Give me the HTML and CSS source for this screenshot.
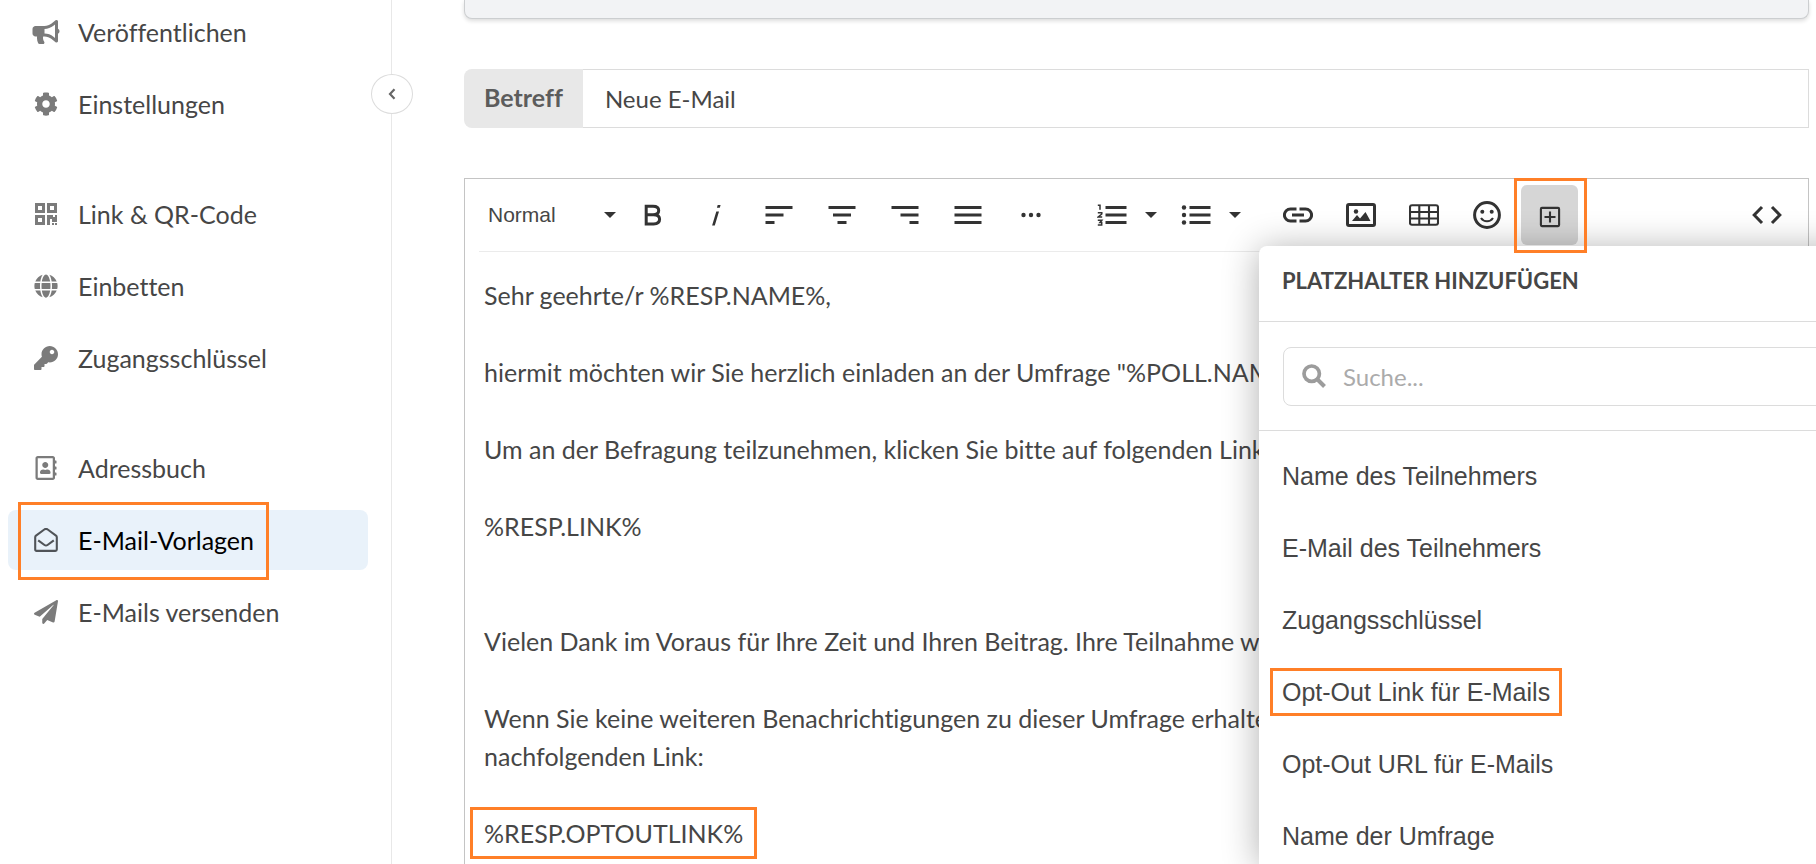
FILE: index.html
```html
<!DOCTYPE html>
<html lang="de">
<head>
<meta charset="utf-8">
<meta name="viewport" content="width=device-width, initial-scale=1">
<title>E-Mail-Vorlagen</title>
<link rel="stylesheet" href="styles.css">
</head>
<body>
<div class="app">
  <aside class="sidebar">
    <nav class="nav">
      <div class="nav-group">
        <a class="nav-item" href="#"><svg class="nav-icon wide" viewBox="0 0 576 512"><path d="M576 240c0-23.630-12.950-44.040-32-55.120V32.010C544 23.260 537.020 0 512 0c-7.120 0-14.190 2.380-19.980 7.020l-85.030 68.030C364.280 109.190 310.660 128 256 128H64c-35.350 0-64 28.650-64 64v96c0 35.350 28.650 64 64 64h33.700c-1.390 10.480-2.180 21.140-2.180 32 0 39.770 9.260 77.350 25.560 110.940 5.190 10.690 16.520 17.060 28.400 17.060h74.280c26.050 0 41.690-29.840 25.900-50.560-16.400-21.520-26.150-48.360-26.150-77.440 0-11.110 1.620-21.790 4.410-32H256c54.660 0 108.280 18.810 150.980 52.950l85.030 68.030a32.023 32.023 0 0 0 19.980 7.020c24.920 0 32-22.780 32-32V295.130C563.050 284.040 576 263.630 576 240zm-96 141.420l-33.050-26.440C392.950 311.780 325.120 288 256 288v-96c69.120 0 136.950-23.780 190.950-66.980L480 98.580v282.840z"/></svg>Veröffentlichen</a>
        <a class="nav-item" href="#"><svg class="nav-icon" viewBox="0 0 512 512"><path d="M487.400 315.700l-42.600-24.600c4.300-23.200 4.300-47 0-70.200l42.600-24.600c4.900-2.800 7.100-8.600 5.500-14-11.100-35.600-30-67.800-54.700-94.600-3.800-4.100-10-5.100-14.800-2.300L380.800 110c-17.900-15.400-38.500-27.300-60.800-35.100V25.800c0-5.600-3.900-10.500-9.400-11.700-36.700-8.200-74.300-7.800-109.200 0-5.500 1.200-9.400 6.100-9.400 11.700V75c-22.200 7.900-42.800 19.800-60.800 35.100L88.700 85.500c-4.900-2.800-11-1.900-14.800 2.300-24.700 26.700-43.600 58.900-54.700 94.600-1.700 5.400.6 11.200 5.500 14L67.300 221c-4.300 23.200-4.300 47 0 70.200l-42.600 24.600c-4.900 2.800-7.100 8.600-5.500 14 11.100 35.600 30 67.800 54.700 94.600 3.800 4.100 10 5.100 14.800 2.300l42.600-24.600c17.900 15.400 38.500 27.300 60.800 35.100v49.200c0 5.600 3.900 10.500 9.400 11.700 36.700 8.200 74.300 7.800 109.200 0 5.500-1.200 9.400-6.100 9.400-11.700v-49.200c22.200-7.900 42.800-19.800 60.800-35.100l42.600 24.600c4.900 2.800 11 1.900 14.800-2.300 24.700-26.700 43.600-58.900 54.700-94.600 1.500-5.500-.7-11.300-5.600-14.100zM256 336c-44.100 0-80-35.900-80-80s35.900-80 80-80 80 35.900 80 80-35.900 80-80 80z"/></svg>Einstellungen</a>
      </div>
      <div class="nav-group">
        <a class="nav-item" href="#"><svg class="nav-icon" viewBox="0 0 24 24"><path fill-rule="evenodd" d="M1 1h10v10H1zM4 4v4h4V4zM13 1h10v10H13zM16 4v4h4V4zM1 13h10v10H1zM4 16v4h4v-4zM13 13h6v2h2v-2h2v7h-5v-3h-2v6h-3zM18 21h2v2h-2zM21 21h2v2h-2z"/></svg>Link &amp; QR-Code</a>
        <a class="nav-item" href="#"><svg class="nav-icon" viewBox="0 0 496 512"><path d="M336.500 160C322 70.700 287.800 8 248 8s-74 62.700-88.500 152h177zM152 256c0 22.200 1.200 43.500 3.300 64h185.300c2.100-20.500 3.300-41.800 3.300-64s-1.200-43.500-3.300-64H155.300c-2.100 20.500-3.300 41.800-3.300 64zm324.700-96c-28.600-67.900-86.500-120.400-158-141.600 24.400 33.800 41.200 84.700 50 141.600h108zM177.200 18.400C105.800 39.600 47.800 92.100 19.300 160h108c8.700-56.900 25.500-107.800 49.900-141.600zM487.400 192H372.700c2.100 21 3.300 42.500 3.300 64s-1.200 43-3.300 64h114.600c5.500-20.500 8.600-41.800 8.600-64s-3.100-43.500-8.500-64zM120 256c0-21.500 1.200-43 3.300-64H8.600C3.200 212.500 0 233.800 0 256s3.200 43.500 8.600 64h114.600c-2-21-3.200-42.500-3.200-64zm39.500 96c14.500 89.300 48.700 152 88.500 152s74-62.700 88.500-152h-177zm159.300 141.600c71.400-21.200 129.400-73.700 158-141.600h-108c-8.800 56.900-25.600 107.800-50 141.600zM19.300 352c28.600 67.900 86.500 120.400 158 141.600-24.400-33.800-41.200-84.700-50-141.600h-108z"/></svg>Einbetten</a>
        <a class="nav-item" href="#"><svg class="nav-icon" viewBox="0 0 512 512"><path d="M512 176.001C512 273.203 433.202 352 336 352c-11.220 0-22.190-1.062-32.827-3.069l-24.012 27.014A23.999 23.999 0 0 1 261.223 384H224v40c0 13.255-10.745 24-24 24h-40v40c0 13.255-10.745 24-24 24H24c-13.255 0-24-10.745-24-24v-78.059c0-6.365 2.529-12.470 7.029-16.971l161.802-161.802C163.108 213.814 160 195.271 160 176 160 78.798 238.797.001 335.999 0 433.488-.001 512 78.511 512 176.001zM336 128c0 26.510 21.490 48 48 48s48-21.490 48-48-21.490-48-48-48-48 21.490-48 48z"/></svg>Zugangsschlüssel</a>
      </div>
      <div class="nav-group">
        <a class="nav-item" href="#"><svg class="nav-icon" viewBox="0 0 448 512"><path d="M436 160c6.600 0 12-5.400 12-12v-40c0-6.600-5.400-12-12-12h-20V48c0-26.500-21.500-48-48-48H48C21.500 0 0 21.500 0 48v416c0 26.500 21.500 48 48 48h320c26.500 0 48-21.500 48-48v-48h20c6.600 0 12-5.400 12-12v-40c0-6.600-5.400-12-12-12h-20v-64h20c6.600 0 12-5.400 12-12v-40c0-6.600-5.400-12-12-12h-20v-64h20zm-68 304H48V48h320v416zM208 256c35.300 0 64-28.700 64-64s-28.700-64-64-64-64 28.700-64 64 28.700 64 64 64zm-89.600 128h179.200c12.400 0 22.400-8.600 22.400-19.200v-19.200c0-31.800-30.100-57.600-67.200-57.600-10.800 0-18.700 8-44.800 8-26.900 0-33.400-8-44.800-8-37.100 0-67.200 25.800-67.200 57.600v19.200c0 10.600 10 19.200 22.400 19.200z"/></svg>Adressbuch</a>
        <a class="nav-item active" href="#" aria-current="page"><svg class="nav-icon" viewBox="0 0 24 24"><path d="M1.200 9.200Q1.200 8.300 2 7.700L10.300 1.500Q12 .3 13.700 1.500L22 7.700Q22.800 8.300 22.800 9.200V21.500Q22.800 22.900 21.400 22.900H2.600Q1.200 22.900 1.200 21.500ZM4.200 12.300L10.500 17Q12 18.100 13.500 17L19.800 12.300" fill="none" stroke="currentColor" stroke-width="2.100"/></svg>E-Mail-Vorlagen<span class="mark mark-nav"></span></a>
        <a class="nav-item" href="#"><svg class="nav-icon" viewBox="0 0 512 512"><path d="M476 3.200L12.500 270.600c-18.100 10.400-15.800 35.600 2.200 43.200L121 358.400l287.300-253.200c5.500-4.900 13.300 2.600 8.600 8.300L176 407v80.500c0 23.600 28.500 32.900 42.500 15.800L282 426l124.600 52.200c14.200 6 30.400-2.900 33-18.200l72-432C515 7.800 493.300-6.800 476 3.200z"/></svg>E-Mails versenden</a>
      </div>
    </nav>
    <button class="collapse" type="button" aria-label="Menü einklappen"><svg width="8" height="12" viewBox="0 0 8 12"><path d="M6.500 1.200L2 6l4.500 4.800" fill="none" stroke="currentColor" stroke-width="2.200"/></svg></button>
  </aside>

  <main class="main">
    <div class="card"></div>
    <div class="subject">
      <label for="subject">Betreff</label>
      <input id="subject" type="text" value="Neue E-Mail">
    </div>

    <section class="editor">
      <div class="toolbar">
        <div class="tools">
          <div class="format">
            <select aria-label="Absatzformat"><option>Normal</option></select>
            <svg class="caret" viewBox="0 0 12 6"><path d="M0 0h12L6 6z"/></svg>
          </div>
          <button class="tool" type="button" aria-label="Fett"><svg viewBox="0 0 30 30"><path d="M8.200 6.200H15Q20.700 6.200 20.700 10.500T15 14.800H8.200H15.600Q21.600 14.800 21.600 19.300T15.600 24H8.200Z" class="line"/></svg></button>
          <button class="tool" type="button" aria-label="Kursiv"><svg viewBox="0 0 30 30"><path d="M15.300 11.500h2.700L13.800 25.500h-2.700zM16.700 5h2.900l-.8 2.800h-2.900z"/></svg></button>
          <button class="tool" type="button" aria-label="Linksbündig"><svg viewBox="0 0 30 30"><path d="M1.500 6h27v3h-27zM1.500 13.500h18v3h-18zM1.500 21h9v3h-9z"/></svg></button>
          <button class="tool" type="button" aria-label="Zentriert"><svg viewBox="0 0 30 30"><path d="M1.500 6h27v3h-27zM6 13.500h18v3H6zM10.500 21h9v3h-9z"/></svg></button>
          <button class="tool" type="button" aria-label="Rechtsbündig"><svg viewBox="0 0 30 30"><path d="M1.500 6h27v3h-27zM10.500 13.500h18v3h-18zM19.500 21h9v3h-9z"/></svg></button>
          <button class="tool" type="button" aria-label="Blocksatz"><svg viewBox="0 0 30 30"><path d="M1.500 6h27v3h-27zM1.500 13.500h27v3h-27zM1.500 21h27v3h-27z"/></svg></button>
          <button class="tool" type="button" aria-label="Mehr"><svg viewBox="0 0 30 30"><circle cx="7.500" cy="15" r="2.200"/><circle cx="15" cy="15" r="2.200"/><circle cx="22.500" cy="15" r="2.200"/></svg></button>
        </div>
        <div class="tools">
          <div class="split">
            <button class="tool" type="button" aria-label="Nummerierte Liste"><svg viewBox="0 0 30 30"><path d="M8.500 6h21v3h-21zM8.500 13.500h21v3h-21zM8.500 21h21v3h-21z"/><path d="M.8 5.200H3v4.600M.8 12.800h4v1.200L1.200 17h4M.8 20.300h4l-1.800 2.100h1.700v2.500H.8" class="line thin"/></svg></button>
            <button class="tool-more" type="button" aria-label="Listenart wählen"><svg class="caret" viewBox="0 0 12 6"><path d="M0 0h12L6 6z"/></svg></button>
          </div>
          <div class="split">
            <button class="tool" type="button" aria-label="Aufzählung"><svg viewBox="0 0 30 30"><path d="M8.500 6h21v3h-21zM8.500 13.500h21v3h-21zM8.500 21h21v3h-21z"/><circle cx="3" cy="7.500" r="2.200"/><circle cx="3" cy="15" r="2.200"/><circle cx="3" cy="22.500" r="2.200"/></svg></button>
            <button class="tool-more" type="button" aria-label="Aufzählungszeichen wählen"><svg class="caret" viewBox="0 0 12 6"><path d="M0 0h12L6 6z"/></svg></button>
          </div>
        </div>
        <div class="tools">
          <button class="tool" type="button" aria-label="Link"><svg viewBox="0 0 30 30"><path d="M13.500 8.900H7.500a6.100 6.100 0 0 0 0 12.200h6M16.500 8.900h6a6.100 6.100 0 0 1 0 12.200h-6M9 15h12" class="line"/></svg></button>
          <button class="tool" type="button" aria-label="Bild"><svg viewBox="0 0 30 30"><rect x="1.500" y="4.500" width="27" height="21" rx="1.500" class="line"/><circle cx="10" cy="11.500" r="2.200"/><path d="M6 21l5-6 3 3.500 5.500-6.500 5 9z"/></svg></button>
          <button class="tool" type="button" aria-label="Tabelle"><svg viewBox="0 0 30 30"><path d="M3 5.200h24q2 0 2 2v15.600q0 2-2 2H3q-2 0-2-2V7.200q0-2 2-2zM1 12h28M1 18.500h28M10.300 5v20M20 5v20" class="line medium"/></svg></button>
          <button class="tool" type="button" aria-label="Emoji"><svg viewBox="0 0 30 30"><circle cx="15" cy="15" r="12.400" class="line"/><circle cx="10.300" cy="11.700" r="2"/><circle cx="19.700" cy="11.700" r="2"/><path d="M9 18q2.200 3.300 6 3.300t6-3.300" class="line medium"/></svg></button>
          <button class="tool pressed" type="button" aria-label="Platzhalter" aria-expanded="true"><svg viewBox="0 0 30 30"><rect x="5.900" y="7.900" width="18.200" height="18.200" rx="1" class="line medium"/><path d="M15 11.500v11M9.500 17h11" class="line medium"/></svg><span class="mark mark-tool"></span></button>
        </div>
        <button class="tool source" type="button" aria-label="Quelltext"><svg viewBox="0 0 30 30"><path d="M10 7L2.200 15l7.800 8M20 7l7.800 8-7.800 8" class="line"/></svg></button>
      </div>

      <div class="body" contenteditable="true" spellcheck="false">
        <p>Sehr geehrte/r %RESP.NAME%,</p>
        <p>hiermit möchten wir Sie herzlich einladen an der Umfrage "%POLL.NAME%</p>
        <p>Um an der Befragung teilzunehmen, klicken Sie bitte auf folgenden Link</p>
        <p>%RESP.LINK%<br><br></p>
        <p>Vielen Dank im Voraus für Ihre Zeit und Ihren Beitrag. Ihre Teilnahme wird</p>
        <p>Wenn Sie keine weiteren Benachrichtigungen zu dieser Umfrage erhalten<br>nachfolgenden Link:</p>
        <p><span class="anchor">%RESP.OPTOUTLINK%<span class="mark mark-text"></span></span></p>
      </div>

      <div class="popover">
        <h2>Platzhalter hinzufügen</h2>
        <div class="search-row">
          <div class="search">
            <svg viewBox="0 0 24 24"><circle cx="9.700" cy="9.700" r="7.700" fill="none" stroke="currentColor" stroke-width="3.700"/><path d="M15.500 15.500l7 7" stroke="currentColor" stroke-width="4"/></svg>
            <input type="search" placeholder="Suche..." aria-label="Suche">
          </div>
        </div>
        <ul class="options">
          <li><button type="button">Name des Teilnehmers</button></li>
          <li><button type="button">E-Mail des Teilnehmers</button></li>
          <li><button type="button">Zugangsschlüssel</button></li>
          <li><button type="button"><span class="anchor">Opt-Out Link für E-Mails<span class="mark mark-option"></span></span></button></li>
          <li><button type="button">Opt-Out URL für E-Mails</button></li>
          <li><button type="button">Name der Umfrage</button></li>
        </ul>
      </div>
    </section>
  </main>
</div>
</body>
</html>
```
FILE: styles.css
```css
* { box-sizing: border-box; }

body {
  margin: 0;
  overflow: hidden;
  background: #fff;
  color: #464646;
  font: 24px/36px Lato, "Open Sans", sans-serif;
  font-variant-ligatures: none;
}

button, input, select { font: inherit; color: inherit; }
button { border: 0; padding: 0; background: none; cursor: pointer; }

.app { display: flex; height: 100vh; overflow: hidden; }

/* Sidebar */
.sidebar {
  position: relative;
  flex: none;
  width: 392px;
  border-right: 1px solid #e8e8e8;
}
.nav {
  display: flex;
  flex-direction: column;
  gap: 50px;
  padding: 2px 23px 0 8px;
}
.nav-group { display: flex; flex-direction: column; gap: 12px; }
.nav-item {
  position: relative;
  display: flex;
  align-items: center;
  gap: 18px;
  height: 60px;
  padding: 0 24px;
  border-radius: 8px;
  color: #464646;
  font-size: 25px;
  text-decoration: none;
}
.nav-icon { flex: none; width: 28px; height: 24px; fill: #7b7b7b; }
.nav-item.active { background: #e9f2fa; color: #000; }
.nav-item.active .nav-icon { color: #505458; }
.collapse {
  position: absolute;
  top: 74px;
  right: -22px;
  display: grid;
  place-items: center;
  width: 42px;
  height: 40px;
  border: 1px solid #dcdcdc;
  border-radius: 50%;
  background: #fff;
  color: #666;
}

/* Orange callouts */
.anchor { position: relative; }
.mark {
  position: absolute;
  z-index: 3;
  border: 3px solid #ff7f27;
  pointer-events: none;
}
.mark-nav { left: 10px; width: 251px; top: -8px; bottom: -10px; }
.mark-tool { inset: -7px -9px -8px -7px; }
.mark-text { inset: -11px -14px; }
.mark-option { inset: -10px -12px; }

/* Main column */
.main { flex: 1; min-width: 0; padding: 0 7px 0 72px; display: flex; flex-direction: column; }
.card {
  flex: none;
  height: 19px;
  border: 1px solid #ccced0;
  border-top: 0;
  border-radius: 0 0 8px 8px;
  background: #f2f3f5;
  box-shadow: 0 2px 4px rgba(0, 0, 0, .14);
}
.subject { flex: none; display: flex; height: 59px; margin: 50px 0; }
.subject label {
  display: flex;
  align-items: center;
  padding: 0 20px 3px;
  border-radius: 8px 0 0 8px;
  background: #e8e8e8;
  color: #5c5c5c;
  font-size: 25px;
  font-weight: 700;
}
.subject input {
  flex: 1;
  min-width: 0;
  padding: 0 22px;
  border: 1px solid #dcdcdc;
  border-left: 0;
  background: #fff;
  outline: 0;
}

/* Editor */
.editor {
  position: relative;
  flex: 1;
  min-height: 0;
  border: 1px solid #c4c4c4;
  border-bottom: 0;
}
.toolbar {
  display: flex;
  gap: 24px;
  margin-left: 14px;
  padding: 6px 13px 6px 0;
  border-bottom: 1px solid #ebebeb;
}
.tools { display: flex; gap: 6px; }
.split { display: flex; }
.format { position: relative; width: 139px; }
.format select {
  width: 100%;
  height: 60px;
  padding: 0 9px;
  border: 0;
  appearance: none;
  background: none;
  font-family: "Liberation Sans", Arial, sans-serif;
  font-size: 21px;
  outline: 0;
}
.caret { width: 12px; height: 6px; fill: #333; }
.format .caret { position: absolute; right: 2px; top: 27px; pointer-events: none; }
.tool {
  position: relative;
  display: grid;
  place-items: center;
  width: 57px;
  height: 60px;
  border-radius: 6px;
}
.tool svg { width: 30px; height: 30px; fill: #333; }
.tool .line { fill: none; stroke: #333; stroke-width: 3; }
.tool .medium { stroke-width: 2.100; }
.tool .thin { stroke-width: 1.500; }
.tool-more { display: grid; place-items: center; width: 21px; }
.tool.pressed { background: #d6d6d6; }
.source { margin-left: auto; }

.body { padding: 24px 19px; outline: 0; font-size: 25px; white-space: nowrap; }
.body p { margin: 0 0 39px; line-height: 38px; }

/* Placeholder popover */
.popover {
  position: absolute;
  z-index: 2;
  top: 67px;
  bottom: 0;
  left: 794px;
  width: 640px;
  border-radius: 8px 8px 0 0;
  background: #fff;
  box-shadow: 0 3px 36px rgba(0, 0, 0, .32);
}
.popover h2 {
  margin: 0;
  padding: 17px 23px 22px;
  border-bottom: 1px solid #dcdcdc;
  font-size: 22px;
  text-transform: uppercase;
}
.search-row { padding: 25px 24px 24px; border-bottom: 1px solid #dcdcdc; }
.search {
  display: flex;
  align-items: center;
  gap: 17px;
  height: 59px;
  padding: 0 18px 2px;
  border: 1px solid #dcdcdc;
  border-radius: 8px;
}
.search svg { flex: none; width: 24px; height: 24px; color: #9c9c9c; }
.search input { flex: 1; min-width: 0; padding: 2px 0 0; border: 0; background: none; outline: 0; }
.search input::placeholder { color: #ababab; opacity: 1; }
.options { margin: 0; padding: 9px 0 0; list-style: none; }
.options button {
  width: 100%;
  height: 72px;
  padding: 0 23px;
  font-family: "Liberation Sans", Arial, sans-serif;
  font-size: 25px;
  text-align: left;
}
```
